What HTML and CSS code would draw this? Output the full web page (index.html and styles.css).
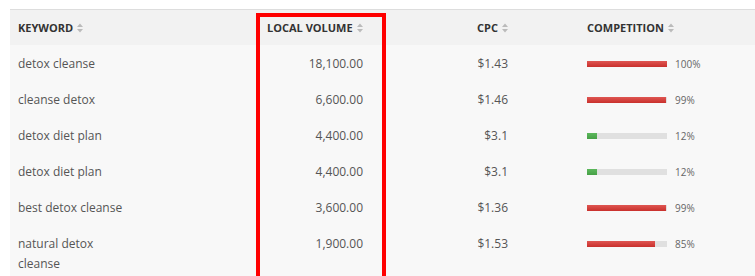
FILE: index.html
```html
<!DOCTYPE html>
<html>
<head>
<meta charset="utf-8">
<link rel="stylesheet" href="styles.css">
</head>
<body>
<div class="page">
  <div class="table">
    <div class="row head">
      <div class="cell kw"><span>KEYWORD</span><svg class="sort" viewBox="0 0 6 10" width="6" height="10"><path d="M0 4 L3 0.5 L6 4 Z M0 6 L3 9.5 L6 6 Z"/></svg></div>
      <div class="cell vol-h"><span>LOCAL VOLUME</span><svg class="sort" viewBox="0 0 6 10" width="6" height="10"><path d="M0 4 L3 0.5 L6 4 Z M0 6 L3 9.5 L6 6 Z"/></svg></div>
      <div class="cell cpc"><span>CPC</span><svg class="sort" viewBox="0 0 6 10" width="6" height="10"><path d="M0 4 L3 0.5 L6 4 Z M0 6 L3 9.5 L6 6 Z"/></svg></div>
      <div class="cell comp"><span>COMPETITION</span><svg class="sort" viewBox="0 0 6 10" width="6" height="10"><path d="M0 4 L3 0.5 L6 4 Z M0 6 L3 9.5 L6 6 Z"/></svg></div>
    </div>
    <div class="row">
      <div class="cell kw"><span class="kwt">detox cleanse</span></div>
      <div class="cell vol">18,100.00</div>
      <div class="cell cpc">$1.43</div>
      <div class="cell comp"><div class="track"><div class="bar red" style="width:100%"></div></div><span class="pct">100%</span></div>
    </div>
    <div class="row">
      <div class="cell kw"><span class="kwt">cleanse detox</span></div>
      <div class="cell vol">6,600.00</div>
      <div class="cell cpc">$1.46</div>
      <div class="cell comp"><div class="track"><div class="bar red" style="width:99%"></div></div><span class="pct">99%</span></div>
    </div>
    <div class="row">
      <div class="cell kw"><span class="kwt">detox diet plan</span></div>
      <div class="cell vol">4,400.00</div>
      <div class="cell cpc">$3.1</div>
      <div class="cell comp"><div class="track"><div class="bar green" style="width:12%"></div></div><span class="pct">12%</span></div>
    </div>
    <div class="row">
      <div class="cell kw"><span class="kwt">detox diet plan</span></div>
      <div class="cell vol">4,400.00</div>
      <div class="cell cpc">$3.1</div>
      <div class="cell comp"><div class="track"><div class="bar green" style="width:12%"></div></div><span class="pct">12%</span></div>
    </div>
    <div class="row">
      <div class="cell kw"><span class="kwt">best detox cleanse</span></div>
      <div class="cell vol">3,600.00</div>
      <div class="cell cpc">$1.36</div>
      <div class="cell comp"><div class="track"><div class="bar red" style="width:99%"></div></div><span class="pct">99%</span></div>
    </div>
    <div class="row">
      <div class="cell kw"><span class="kwt">natural detox cleanse</span></div>
      <div class="cell vol">1,900.00</div>
      <div class="cell cpc">$1.53</div>
      <div class="cell comp"><div class="track"><div class="bar red" style="width:85%"></div></div><span class="pct">85%</span></div>
    </div>
  </div>
  <div class="highlight"></div>
</div>
</body>
</html>
```

FILE: styles.css
```css
html, body {
  margin: 0;
  padding: 0;
  background: #ffffff;
}
.page {
  position: relative;
  padding: 9px 0 0 10px;
  height: 267px;
  overflow: hidden;
  font-family: "Open Sans", "Liberation Sans", sans-serif;
}
.table {
  border-top: 1px solid #dddddd;
  background: #f8f8f8;
  width: 745px;
}
.row {
  display: grid;
  grid-template-columns: 249px 112px 145px 1fr;
  font-size: 12px;
  line-height: 20px;
  color: #555555;
}
.row .cell {
  padding: 9px 8px 7px;
}
.row.head {
  background: #f2f2f2;
  height: 35px;
  font-size: 11px;
  font-weight: 700;
  color: #333333;
}
.row.head .cell {
  display: flex;
  align-items: center;
  padding-top: 0;
  padding-bottom: 0;
  gap: 4px;
}
.sort {
  fill: #bbbbbb;
  flex: none;
}
.kwt {
  display: block;
  max-width: 112px;
}
.vol {
  text-align: right;
}
.row .cpc {
  text-align: right;
  justify-content: flex-end;
}
.row .comp {
  padding-left: 71px;
  display: flex;
  align-items: center;
  align-self: start;
  height: 20px;
}
.row.head .comp {
  height: 35px;
}
.track {
  width: 80px;
  height: 6px;
  background: #e0e0e0;
  flex: none;
}
.bar {
  height: 6px;
}
.bar.red {
  background: linear-gradient(to bottom, #df5652, #c9302c);
}
.bar.green {
  background: linear-gradient(to bottom, #5cb85c, #46a046);
}
.pct {
  font-size: 10px;
  color: #666666;
  margin-left: 8px;
}
.highlight {
  position: absolute;
  left: 256px;
  top: 13px;
  width: 122px;
  height: 300px;
  border: 4px solid #ff0000;
}
```
